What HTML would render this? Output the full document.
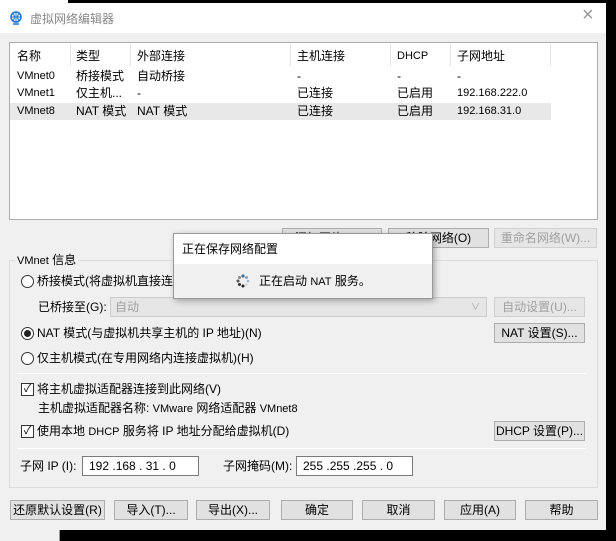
<!DOCTYPE html>
<html><head><meta charset="utf-8"><style>
*{box-sizing:border-box;margin:0;padding:0}
body{width:616px;height:541px;background:#000;position:relative;overflow:hidden;font-family:"Liberation Sans","Noto Sans CJK SC",sans-serif;font-size:12px;color:#000}
.a{position:absolute;white-space:nowrap;line-height:16px}
.s{font-size:11px}
.win{position:absolute;left:0;top:3px;width:606px;height:527px;background:#f0f0f0}
.title{position:absolute;left:0;top:0;width:606px;height:30px;background:#fff}
.btn{position:absolute;height:20px;border:1px solid #adadad;background:#e1e1e1;text-align:center;line-height:18px}
.dis{color:#a0a0a0;border-color:#d0d0d0;background:#e6e6e6}
.radio{position:absolute;width:13px;height:13px;border:1px solid #333;border-radius:50%;background:#fff}
.cb{position:absolute;width:13px;height:13px;border:1px solid #333;background:#fff;font-size:11px;line-height:11px;text-align:center}
.inp{position:absolute;height:20px;border:1px solid #7a7a7a;background:#fff;line-height:18px;padding-left:6px}
.sep{position:absolute;height:1px;background:#d5d5d5;border-bottom:1px solid #fff}
</style></head><body>
<div class="a" style="left:0;top:0;width:68px;height:3px;background:#fff"></div>
<div class="a" style="left:0;top:530px;width:60px;height:11px;background:#f0f0f0;border-right:1px solid #999"></div>
<div class="win">
 <div class="title">
  <svg class="a" style="left:9px;top:8px" width="14" height="14" viewBox="0 0 14 14"><circle cx="7" cy="6" r="5" fill="none" stroke="#1a73c8" stroke-width="1.5"/><path d="M2 6h10M7 1v10M4 2.5q3 3.5 0 7M10 2.5q-3 3.5 0 7" stroke="#1a73c8" fill="none"/><path d="M4 13h6" stroke="#1a73c8" stroke-width="1.5"/></svg>
  <div class="a" style="left:30px;top:8px;color:#888">虚拟网络编辑器</div>
  <div class="a" style="left:582px;top:4px;font-size:20px;color:#999;font-weight:lighter">×</div>
 </div>
</div>
<div class="a" style="left:9px;top:42px;width:589px;height:178px;background:#fff;border:1px solid #adadad"></div>
<div class="a" style="left:10px;top:103px;width:541px;height:17px;background:#e8e8e8"></div>
<div class="a" style="left:70px;top:44px;width:1px;height:22px;background:#e5e5e5"></div>
<div class="a" style="left:130px;top:44px;width:1px;height:22px;background:#e5e5e5"></div>
<div class="a" style="left:290px;top:44px;width:1px;height:22px;background:#e5e5e5"></div>
<div class="a" style="left:390px;top:44px;width:1px;height:22px;background:#e5e5e5"></div>
<div class="a" style="left:450px;top:44px;width:1px;height:22px;background:#e5e5e5"></div>
<div class="a" style="left:550px;top:44px;width:1px;height:22px;background:#e5e5e5"></div>
<div class="a" style="left:17px;top:48px">名称</div><div class="a" style="left:76px;top:48px">类型</div><div class="a" style="left:137px;top:48px">外部连接</div><div class="a" style="left:297px;top:48px">主机连接</div><div class="a s" style="left:397px;top:48px">DHCP</div><div class="a" style="left:457px;top:48px">子网地址</div>
<div class="a s" style="left:17px;top:68px">VMnet0</div><div class="a" style="left:76px;top:68px">桥接模式</div><div class="a" style="left:137px;top:68px">自动桥接</div><div class="a" style="left:297px;top:68px">-</div><div class="a" style="left:397px;top:68px">-</div><div class="a" style="left:457px;top:68px">-</div>
<div class="a s" style="left:17px;top:85px">VMnet1</div><div class="a" style="left:76px;top:85px">仅主机...</div><div class="a" style="left:137px;top:85px">-</div><div class="a" style="left:297px;top:85px">已连接</div><div class="a" style="left:397px;top:85px">已启用</div><div class="a s" style="left:457px;top:85px">192.168.222.0</div>
<div class="a s" style="left:17px;top:103px">VMnet8</div><div class="a" style="left:76px;top:103px">NAT 模式</div><div class="a" style="left:137px;top:103px">NAT 模式</div><div class="a" style="left:297px;top:103px">已连接</div><div class="a" style="left:397px;top:103px">已启用</div><div class="a s" style="left:457px;top:103px">192.168.31.0</div>
<div class="btn" style="left:282px;top:228px;width:100px">添加网络(E)...</div>
<div class="btn" style="left:388px;top:228px;width:101px">移除网络(O)</div>
<div class="btn dis" style="left:494px;top:228px;width:103px">重命名网络(W)...</div>
<div class="a" style="left:9px;top:260px;width:589px;height:228px;border:1px solid #dcdcdc"></div>
<div class="a" style="left:15px;top:252px;background:#f0f0f0;padding:0 2px"><span class="s">VMnet</span> 信息</div>
<div class="radio" style="left:21px;top:275px"></div><div class="a" style="left:37px;top:273px">桥接模式(将虚拟机直接连接到外部网络)(B)</div>
<div class="a" style="left:38px;top:299px">已桥接至(G):</div>
<div class="a" style="left:110px;top:297px;width:377px;height:20px;background:#e6e6e6;border:1px solid #ccc;color:#a0a0a0;padding-left:4px;line-height:18px">自动<span style="position:absolute;right:6px;font-size:9px">∨</span></div>
<div class="btn dis" style="left:494px;top:297px;width:91px">自动设置(U)...</div>
<div class="radio" style="left:21px;top:327px"><div style="position:absolute;left:2px;top:2px;width:7px;height:7px;border-radius:50%;background:#222"></div></div>
<div class="a" style="left:37px;top:325px">NAT 模式(与虚拟机共享主机的 IP 地址)(N)</div>
<div class="btn" style="left:494px;top:323px;width:91px">NAT 设置(S)...</div>
<div class="radio" style="left:21px;top:352px"></div><div class="a" style="left:37px;top:350px">仅主机模式(在专用网络内连接虚拟机)(H)</div>
<div class="sep" style="left:17px;top:373px;width:569px"></div>
<div class="cb" style="left:21px;top:383px">✓</div><div class="a" style="left:37px;top:381px">将主机虚拟适配器连接到此网络(V)</div>
<div class="a" style="left:38px;top:400px">主机虚拟适配器名称: <span class="s">VMware</span> 网络适配器 <span class="s">VMnet8</span></div>
<div class="cb" style="left:21px;top:425px">✓</div><div class="a" style="left:37px;top:423px">使用本地 <span class="s">DHCP</span> 服务将 IP 地址分配给虚拟机(D)</div>
<div class="btn" style="left:494px;top:421px;width:91px">DHCP 设置(P)...</div>
<div class="sep" style="left:17px;top:448px;width:569px"></div>
<div class="a" style="left:20px;top:458px">子网 IP (I):</div>
<div class="inp" style="left:82px;top:456px;width:117px">192 .168 . 31 . 0</div>
<div class="a" style="left:223px;top:458px">子网掩码(M):</div>
<div class="inp" style="left:296px;top:456px;width:117px">255 .255 .255 . 0</div>
<div class="btn" style="left:10px;top:500px;width:95px">还原默认设置(R)</div>
<div class="btn" style="left:114px;top:500px;width:74px">导入(T)...</div>
<div class="btn" style="left:196px;top:500px;width:74px">导出(X)...</div>
<div class="btn" style="left:281px;top:500px;width:72px">确定</div>
<div class="btn" style="left:362px;top:500px;width:73px">取消</div>
<div class="btn" style="left:444px;top:500px;width:72px">应用(A)</div>
<div class="btn" style="left:525px;top:500px;width:73px">帮助</div>
<div class="a" style="left:173px;top:233px;width:260px;height:66px;background:#f0f0f0;border:1px solid #999;box-shadow:2px 2px 6px rgba(0,0,0,.3)">
 <div style="position:absolute;left:0;top:0;width:258px;height:30px;background:#fff"></div>
 <div class="a" style="left:8px;top:7px">正在保存网络配置</div>
 <svg class="a" style="left:62px;top:40px" width="14" height="14" viewBox="0 0 14 14"><g fill="#3b6ea8"><circle cx="7" cy="2" r="1.6"/><circle cx="10.5" cy="3.5" r="1.4" fill="#6d97c4"/><circle cx="12" cy="7" r="1.3" fill="#9cb9d9"/><circle cx="10.5" cy="10.5" r="1.2" fill="#c3d4e8"/><circle cx="7" cy="12" r="1.5" fill="#222"/><circle cx="3.5" cy="10.5" r="1.5" fill="#333"/><circle cx="2" cy="7" r="1.5" fill="#555"/><circle cx="3.5" cy="3.5" r="1.5" fill="#888"/></g></svg>
 <div class="a" style="left:85px;top:39px">正在启动 <span class="s">NAT</span> 服务。</div>
</div>
</body></html>
